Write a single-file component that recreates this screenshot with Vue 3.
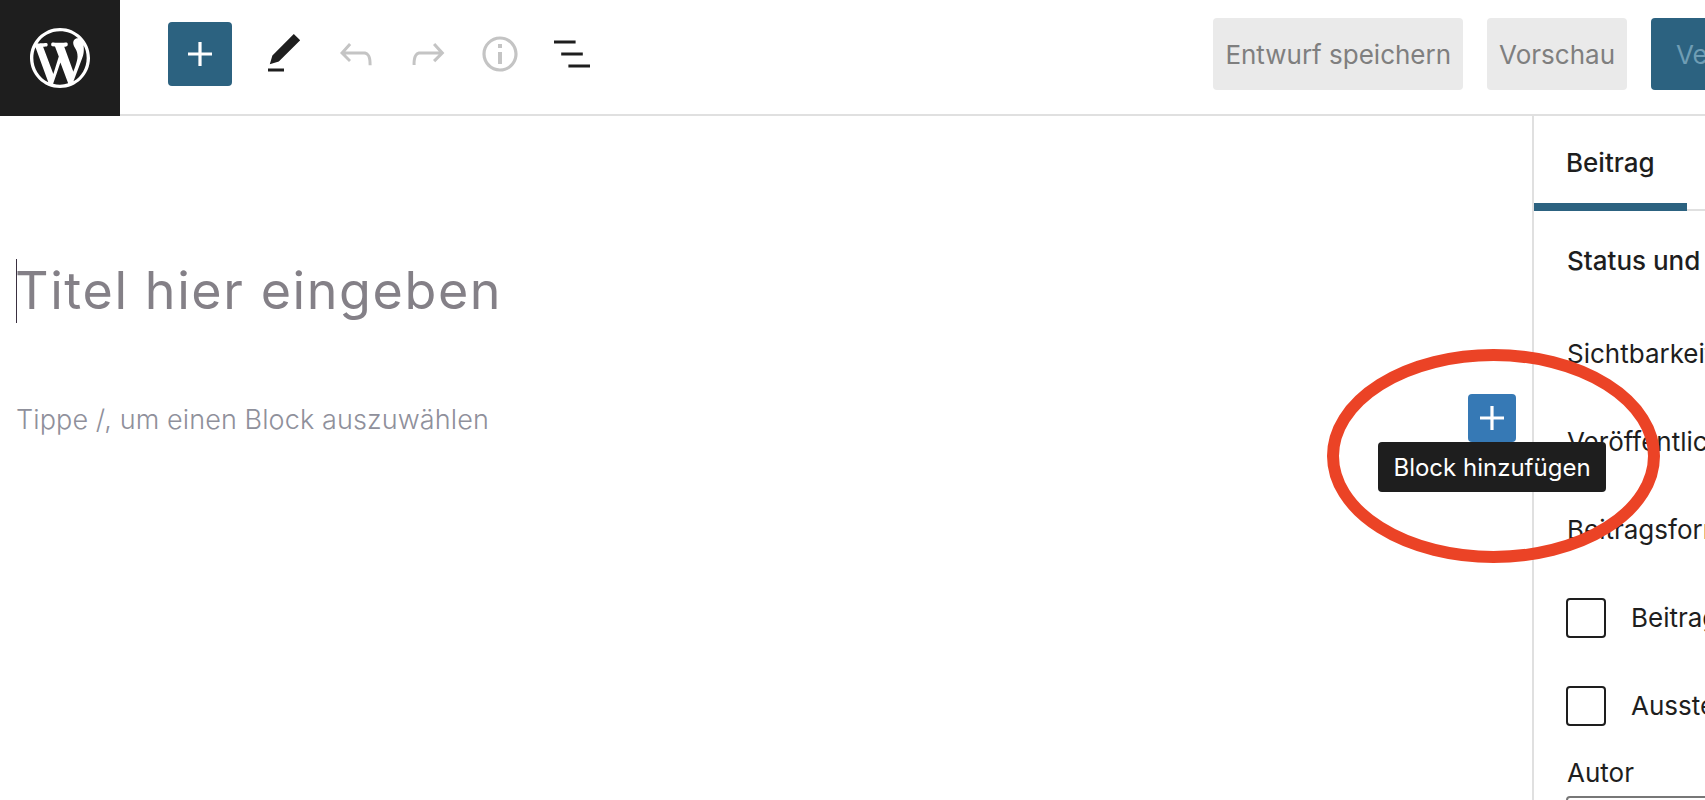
<script setup>
const toolIcons = [
  { name: 'edit', dim: false, d: 'M20.1 5.1L16.9 2 6.2 12.7l-1.3 4.4 4.5-1.3L20.1 5.1zM4 20.8h8v-1.5H4v1.5z' },
  { name: 'undo', dim: true, d: 'M18.3 11.7c-.6-.6-1.4-.9-2.3-.9H6.7l2.9-3.3-1.1-1-4.5 5L8.5 16l1-1-2.7-2.7H16c.5 0 .9.2 1.3.5 1 1 1 3.4 1 4.5v.3h1.5v-.2c0-1.5 0-4.3-1.5-5.7z' },
  { name: 'redo', dim: true, d: 'M15.6 6.5l-1.1 1 2.9 3.3H8c-.9 0-1.7.3-2.3.9-1.4 1.5-1.4 4.2-1.4 5.6v.2h1.5v-.3c0-1.1 0-3.5 1-4.5.3-.3.7-.5 1.3-.5h9.2L14.5 15l1.1 1.1 4.6-4.6-4.6-5z' },
  { name: 'info', dim: true, d: 'M12 3.2c-4.8 0-8.8 3.9-8.8 8.8 0 4.8 3.9 8.8 8.8 8.8 4.8 0 8.8-3.9 8.8-8.8 0-4.8-4-8.8-8.8-8.8zm0 16c-4 0-7.2-3.3-7.2-7.2C4.8 8 8 4.8 12 4.8s7.2 3.3 7.2 7.2c0 4-3.2 7.2-7.2 7.2zM11 17h2v-6h-2v6zm0-8h2V7h-2v2z' },
  { name: 'list', dim: false, d: 'M13.8 5.2H3v1.5h10.8V5.2zm-3.6 12v1.5H21v-1.5H10.2zm7.2-6H6.6v1.5h10.8v-1.5z' }
]

const plus = 'M18 11.2h-5.2V6h-1.6v5.2H6v1.6h5.2V18h1.6v-5.2H18z'

const panelRows = ['Sichtbarkeit', 'Veröffentlichen', 'Beitragsformat']
const checks = ['Beitrag oben halten', 'Ausstehender Review']
</script>

<template>
  <div class="page">
    <header class="topbar">
      <div class="logo">
        <svg width="60" height="60" viewBox="0 0 20 20" fill="#fff">
          <path d="M20 10c0-5.51-4.49-10-10-10C4.48 0 0 4.49 0 10c0 5.52 4.48 10 10 10 5.51 0 10-4.48 10-10zM7.78 15.37L4.37 6.22c.55-.02 1.17-.08 1.17-.08.5-.06.44-1.13-.06-1.11 0 0-1.45.11-2.37.11-.18 0-.37 0-.58-.01C4.12 2.69 6.87 1.11 10 1.11c2.33 0 4.45.87 6.05 2.34-.68-.11-1.65.39-1.65 1.58 0 .74.45 1.36.9 2.1.35.61.55 1.36.55 2.46 0 1.49-1.4 5-1.4 5l-3.03-8.37c.54-.02.82-.17.82-.17.5-.05.44-1.25-.06-1.22 0 0-1.44.12-2.38.12-.87 0-2.33-.12-2.33-.12-.5-.03-.56 1.2-.06 1.22l.92.08 1.26 3.41zM17.41 10c.24-.64.74-1.87.43-4.25.7 1.29 1.05 2.71 1.05 4.25 0 3.29-1.73 6.24-4.4 7.78.97-2.59 1.94-5.2 2.92-7.78zM6.1 18.09C3.12 16.65 1.11 13.53 1.11 10c0-1.3.23-2.48.72-3.59C3.25 10.3 4.67 14.2 6.1 18.09zm4.03-6.63l2.58 6.98c-.86.29-1.76.45-2.71.45-.79 0-1.57-.11-2.29-.33.81-2.38 1.62-4.74 2.42-7.1z" />
        </svg>
      </div>

      <div class="toolbar">
        <button class="add-main">
          <svg width="48" height="48" viewBox="0 0 24 24" fill="#fff"><path :d="plus" /></svg>
        </button>

        <div class="tools">
          <svg
            v-for="icon in toolIcons"
            :key="icon.name"
            width="48"
            height="48"
            viewBox="0 0 24 24"
            :fill="icon.dim ? '#c4c4c4' : '#1e1e1e'">
            <path :d="icon.d" />
          </svg>
        </div>

        <div class="actions">
          <button class="ghost">Entwurf speichern</button>
          <button class="ghost">Vorschau</button>
          <button class="publish">Veröffentlichen</button>
        </div>
      </div>
    </header>

    <main class="body">
      <section class="editor">
        <h1 class="title">Titel hier eingeben</h1>

        <div class="block-row">
          <p class="placeholder">Tippe /, um einen Block auszuwählen</p>

          <div class="inserter">
            <button class="add-small">
              <svg width="48" height="48" viewBox="0 0 24 24" fill="#fff"><path :d="plus" /></svg>
            </button>
            <div class="tooltip">Block hinzufügen</div>
          </div>
        </div>
      </section>

      <aside class="sidebar">
        <div class="tabs">
          <div class="tab active">Beitrag</div>
          <div class="tab">Block</div>
        </div>

        <div class="panel">
          <h2 class="panel-title">Status und Sichtbarkeit</h2>

          <div
            v-for="row in panelRows"
            :key="row"
            class="panel-row">
            {{ row }}
          </div>

          <div
            v-for="check in checks"
            :key="check"
            class="panel-row check-row">
            <span class="box"></span>
            {{ check }}
          </div>

          <div class="author">Autor</div>
          <div class="author-select"></div>
        </div>
      </aside>
    </main>

    <svg class="circle" width="333" height="214" viewBox="0 0 333 214">
      <ellipse cx="166.500" cy="107" rx="160.500" ry="101" fill="none" stroke="#eb4326" stroke-width="12" />
    </svg>
  </div>
</template>

<style scoped>
.page {
  position: relative;
  width: 1705px;
  height: 800px;
  overflow: hidden;
  background: #fff;
  font-family: Inter, "Liberation Sans", sans-serif;
  color: #1e1e1e;
}

button {
  border: none;
  padding: 0;
  font-family: inherit;
}

.topbar {
  display: flex;
  height: 116px;
}

.logo {
  width: 120px;
  flex-shrink: 0;
  background: #1e1e1e;
  display: flex;
  align-items: center;
  justify-content: center;
}

.toolbar {
  flex: 1;
  display: flex;
  align-items: center;
  min-width: 0;
  padding: 0 0 6px 48px;
  border-bottom: 2px solid #e0e0e0;
}

.add-main {
  width: 64px;
  height: 64px;
  border-radius: 4px;
  background: #2c6280;
  display: flex;
  align-items: center;
  justify-content: center;
}

.tools {
  display: flex;
  gap: 24px;
  margin-left: 28px;
}

.actions {
  display: flex;
  gap: 24px;
  margin-left: auto;
  flex-shrink: 0;
  margin-right: -173px;
}

.actions button {
  height: 72px;
  border-radius: 4px;
  font-size: 26px;
  padding: 0 12px;
  white-space: nowrap;
}

.ghost {
  background: #eaeaea;
  color: #7f7f7f;
}

.actions .publish {
  background: #2c6280;
  color: #6f9db4;
  padding: 0 25px;
  width: 227px;
}

.body {
  display: flex;
  height: 684px;
}

.editor {
  flex: 1;
  min-width: 0;
  padding: 143px 16px 0 16px;
}

.title {
  margin: 0;
  height: 64px;
  line-height: 64px;
  border-left: 1.5px solid #3a3040;
  font-size: 52px;
  font-weight: 400;
  letter-spacing: 1.6px;
  text-indent: -2px;
  color: #848087;
}

.block-row {
  display: flex;
  align-items: center;
  justify-content: space-between;
  margin-top: 71px;
}

.placeholder {
  margin: 2px 0 0 0;
  font-size: 27px;
  font-weight: 300;
  letter-spacing: 0.1px;
  color: #8f909b;
}

.inserter {
  position: relative;
  width: 48px;
  height: 48px;
}

.add-small {
  width: 48px;
  height: 48px;
  border-radius: 4px;
  background: #3679b5;
  display: block;
}

.tooltip {
  position: absolute;
  top: 48px;
  left: -90px;
  width: 228px;
  height: 50px;
  line-height: 52px;
  text-align: center;
  border-radius: 4px;
  background: #1e1e1e;
  color: #fff;
  font-size: 24px;
  z-index: 2;
}

.sidebar {
  width: 173px;
  box-sizing: border-box;
  flex-shrink: 0;
  border-left: 2px solid #e0e0e0;
  overflow: hidden;
  white-space: nowrap;
}

.tabs {
  display: flex;
  height: 95px;
  box-sizing: border-box;
  border-bottom: 2px solid #e0e0e0;
}

.tab {
  width: 153px;
  flex-shrink: 0;
  box-sizing: border-box;
  padding-left: 32px;
  line-height: 94px;
  font-size: 26px;
  font-weight: 500;
}

.tab.active {
  height: 95px;
  border-bottom: 8px solid #2c6280;
}

.panel {
  padding-left: 33px;
}

.panel-title {
  margin: 0;
  font-size: 26px;
  font-weight: 500;
  line-height: 99px;
}

.panel-row {
  height: 88px;
  line-height: 88px;
  font-size: 26px;
}

.check-row {
  display: flex;
  align-items: center;
  gap: 25px;
  margin-left: -1px;
}

.box {
  width: 40px;
  height: 40px;
  box-sizing: border-box;
  flex-shrink: 0;
  border: 2px solid #1e1e1e;
  border-radius: 4px;
}

.author {
  height: 46px;
  line-height: 46px;
  font-size: 26px;
}

.author-select {
  width: 300px;
  height: 60px;
  box-sizing: border-box;
  margin-left: -1px;
  border: 2px solid #777;
  border-radius: 4px;
}

.circle {
  position: absolute;
  left: 1327px;
  top: 349px;
  z-index: 3;
}
</style>

<style>
html,
body {
  margin: 0;
  overflow: hidden;
}
</style>
